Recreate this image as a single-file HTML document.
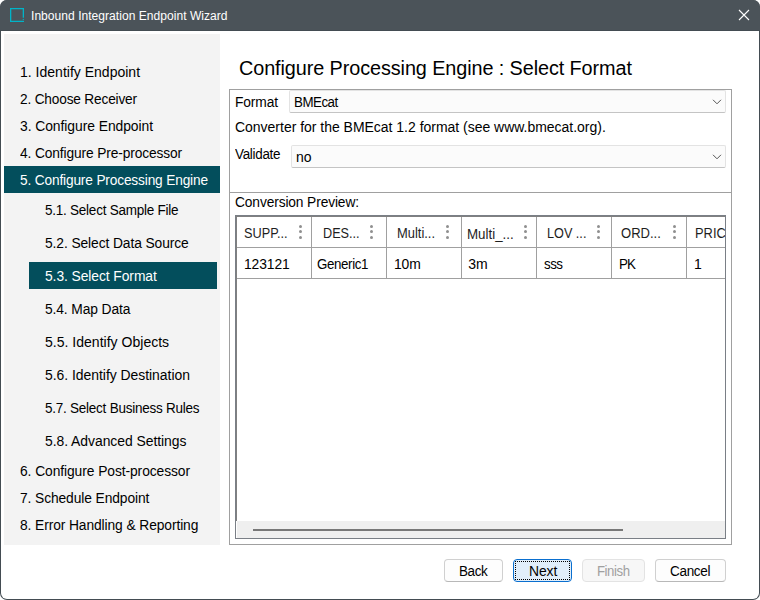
<!DOCTYPE html>
<html><head><meta charset="utf-8">
<style>
*{margin:0;padding:0;box-sizing:border-box}
html,body{width:760px;height:600px;overflow:hidden;background:#ffffff}
body{position:relative;font-family:"Liberation Sans",sans-serif;font-size:14px;color:#000}
.a{position:absolute;white-space:nowrap}
.r{position:absolute}
</style></head><body>
<div class="r" style="left:0;top:0;width:760px;height:600px;border-radius:7px;background:#434c52;overflow:hidden"><div class="r" style="left:0;top:0;width:760px;height:30px;background:#4b5359"></div><div class="r" style="left:1px;top:31px;width:758px;height:568px;background:#fff;border-radius:0 0 6px 6px"></div></div>
<svg class="a" style="left:0;top:0" width="30" height="30" viewBox="0 0 30 30"><path d="M23.35 17.7V8.65H10.65V21.35H24" fill="none" stroke="#00b4c8" stroke-width="1.3"/><circle cx="23.3" cy="19.35" r="0.7" fill="#00b4c8"/></svg>
<div class="a" style="left:30.5px;top:9px;font-size:12px;line-height:14px;letter-spacing:0.026px;transform:scaleX(1.0045);transform-origin:0 0;color:#ffffff;">Inbound Integration Endpoint Wizard</div>
<svg class="a" style="left:736px;top:7px" width="16" height="16" viewBox="0 0 16 16"><path d="M3 3L13 13M13 3L3 13" stroke="#fff" stroke-width="1.1"/></svg>
<div class="r" style="left:4px;top:34px;width:216px;height:511px;background:#f3f3f3"></div>
<div class="r" style="left:4px;top:166px;width:216px;height:27px;background:#034e5c"></div>
<div class="r" style="left:29px;top:262px;width:188px;height:27px;background:#034e5c"></div>
<div class="a" style="left:20px;top:64px;font-size:14px;line-height:16px;letter-spacing:0.005px;transform:scaleX(1.0007);transform-origin:0 0;">1. Identify Endpoint</div>
<div class="a" style="left:20px;top:91px;font-size:14px;line-height:16px;letter-spacing:-0.178px;transform:scaleX(0.9760);transform-origin:0 0;">2. Choose Receiver</div>
<div class="a" style="left:20px;top:118px;font-size:14px;line-height:16px;letter-spacing:-0.060px;transform:scaleX(0.9912);transform-origin:0 0;">3. Configure Endpoint</div>
<div class="a" style="left:20px;top:145px;font-size:14px;line-height:16px;letter-spacing:-0.122px;transform:scaleX(0.9821);transform-origin:0 0;">4. Configure Pre-processor</div>
<div class="a" style="left:20px;top:172px;font-size:14px;line-height:16px;letter-spacing:-0.156px;transform:scaleX(0.9776);transform-origin:0 0;color:#fff;">5. Configure Processing Engine</div>
<div class="a" style="left:45px;top:202px;font-size:14px;line-height:16px;letter-spacing:-0.246px;transform:scaleX(0.9638);transform-origin:0 0;">5.1. Select Sample File</div>
<div class="a" style="left:45px;top:235px;font-size:14px;line-height:16px;letter-spacing:-0.095px;transform:scaleX(0.9860);transform-origin:0 0;">5.2. Select Data Source</div>
<div class="a" style="left:45px;top:268px;font-size:14px;line-height:16px;letter-spacing:-0.076px;transform:scaleX(0.9889);transform-origin:0 0;color:#fff;">5.3. Select Format</div>
<div class="a" style="left:45px;top:301px;font-size:14px;line-height:16px;letter-spacing:-0.106px;transform:scaleX(0.9857);transform-origin:0 0;">5.4. Map Data</div>
<div class="a" style="left:45px;top:334px;font-size:14px;line-height:16px;letter-spacing:0.010px;transform:scaleX(1.0016);transform-origin:0 0;">5.5. Identify Objects</div>
<div class="a" style="left:45px;top:367px;font-size:14px;line-height:16px;letter-spacing:-0.029px;transform:scaleX(0.9953);transform-origin:0 0;">5.6. Identify Destination</div>
<div class="a" style="left:45px;top:400px;font-size:14px;line-height:16px;letter-spacing:-0.249px;transform:scaleX(0.9640);transform-origin:0 0;">5.7. Select Business Rules</div>
<div class="a" style="left:45px;top:433px;font-size:14px;line-height:16px;letter-spacing:-0.043px;transform:scaleX(0.9938);transform-origin:0 0;">5.8. Advanced Settings</div>
<div class="a" style="left:20px;top:463px;font-size:14px;line-height:16px;letter-spacing:-0.082px;transform:scaleX(0.9878);transform-origin:0 0;">6. Configure Post-processor</div>
<div class="a" style="left:20px;top:490px;font-size:14px;line-height:16px;letter-spacing:-0.100px;transform:scaleX(0.9859);transform-origin:0 0;">7. Schedule Endpoint</div>
<div class="a" style="left:20px;top:517px;font-size:14px;line-height:16px;letter-spacing:-0.096px;transform:scaleX(0.9856);transform-origin:0 0;">8. Error Handling &amp; Reporting</div>
<div class="a" style="left:239px;top:57px;font-size:20px;line-height:23px;letter-spacing:-0.087px;transform:scaleX(0.9909);transform-origin:0 0;">Configure Processing Engine : Select Format</div>
<div class="r" style="left:229px;top:89px;width:503px;height:456px;border:1px solid #a0a0a0"></div>
<div class="r" style="left:230px;top:192px;width:501px;height:1px;background:#a0a0a0"></div>
<div class="r" style="left:289px;top:90px;width:437px;height:23px;background:#fbfbfb;border:1px solid #e3e3e3;border-bottom-color:#c4c4c4;border-radius:2px"></div>
<svg class="a" style="left:712px;top:99px" width="10" height="7" viewBox="0 0 10 7"><path d="M1 0.8L5 4.8L9 0.8" fill="none" stroke="#555" stroke-width="1.0"/></svg>
<div class="r" style="left:291px;top:145px;width:435px;height:23px;background:#fbfbfb;border:1px solid #e3e3e3;border-bottom-color:#c4c4c4;border-radius:2px"></div>
<svg class="a" style="left:712px;top:154px" width="10" height="7" viewBox="0 0 10 7"><path d="M1 0.8L5 4.8L9 0.8" fill="none" stroke="#555" stroke-width="1.0"/></svg>
<div class="a" style="left:235px;top:94px;font-size:14px;line-height:16px;letter-spacing:-0.133px;transform:scaleX(0.9852);transform-origin:0 0;">Format</div>
<div class="a" style="left:294px;top:94px;font-size:14px;line-height:16px;letter-spacing:-0.506px;transform:scaleX(0.9509);transform-origin:0 0;">BMEcat</div>
<div class="a" style="left:235px;top:119px;font-size:14px;line-height:16px;letter-spacing:-0.010px;transform:scaleX(0.9985);transform-origin:0 0;">Converter for the BMEcat 1.2 format (see www.bmecat.org).</div>
<div class="a" style="left:235px;top:146px;font-size:14px;line-height:16px;letter-spacing:-0.301px;transform:scaleX(0.9592);transform-origin:0 0;">Validate</div>
<div class="a" style="left:296px;top:149px;font-size:14px;line-height:16px;">no</div>
<div class="a" style="left:235px;top:194px;font-size:14px;line-height:16px;letter-spacing:-0.123px;transform:scaleX(0.9831);transform-origin:0 0;">Conversion Preview:</div>
<div class="r" style="left:235px;top:215px;width:491px;height:324px;border:1px solid #7a7f86;background:#fff"></div>
<div class="r" style="left:236px;top:216px;width:1px;height:305px;background:#808080"></div>
<div class="r" style="left:236px;top:216px;width:489px;height:1px;background:#808080"></div>
<div class="r" style="left:237px;top:247px;width:488px;height:1px;background:#a0a0a0"></div>
<div class="r" style="left:237px;top:278px;width:488px;height:1px;background:#a0a0a0"></div>
<div class="r" style="left:311px;top:217px;width:1px;height:62px;background:#a0a0a0"></div>
<div class="r" style="left:386px;top:217px;width:1px;height:62px;background:#a0a0a0"></div>
<div class="r" style="left:461px;top:217px;width:1px;height:62px;background:#a0a0a0"></div>
<div class="r" style="left:536px;top:217px;width:1px;height:62px;background:#a0a0a0"></div>
<div class="r" style="left:611px;top:217px;width:1px;height:62px;background:#a0a0a0"></div>
<div class="r" style="left:686px;top:217px;width:1px;height:62px;background:#a0a0a0"></div>
<div class="a" style="left:244.4px;top:225px;font-size:14px;line-height:16px;color:#1e1e1e;transform:scaleX(0.9080);transform-origin:0 0;">SUPP...</div>
<div class="r" style="left:299.4px;top:225.1px;width:3px;height:3px;border-radius:50%;background:#8f8f8f"></div>
<div class="r" style="left:299.4px;top:230.4px;width:3px;height:3px;border-radius:50%;background:#8f8f8f"></div>
<div class="r" style="left:299.4px;top:235.5px;width:3px;height:3px;border-radius:50%;background:#8f8f8f"></div>
<div class="a" style="left:322.6px;top:225px;font-size:14px;line-height:16px;color:#1e1e1e;transform:scaleX(0.9044);transform-origin:0 0;">DES...</div>
<div class="r" style="left:370.4px;top:225.1px;width:3px;height:3px;border-radius:50%;background:#8f8f8f"></div>
<div class="r" style="left:370.4px;top:230.4px;width:3px;height:3px;border-radius:50%;background:#8f8f8f"></div>
<div class="r" style="left:370.4px;top:235.5px;width:3px;height:3px;border-radius:50%;background:#8f8f8f"></div>
<div class="a" style="left:397px;top:225px;font-size:14px;line-height:16px;color:#1e1e1e;transform:scaleX(0.9219);transform-origin:0 0;">Multi...</div>
<div class="r" style="left:446.3px;top:225.1px;width:3px;height:3px;border-radius:50%;background:#8f8f8f"></div>
<div class="r" style="left:446.3px;top:230.4px;width:3px;height:3px;border-radius:50%;background:#8f8f8f"></div>
<div class="r" style="left:446.3px;top:235.5px;width:3px;height:3px;border-radius:50%;background:#8f8f8f"></div>
<div class="a" style="left:466.5px;top:226px;font-size:14px;line-height:16px;color:#1e1e1e;transform:scaleX(0.9531);transform-origin:0 0;">Multi_...</div>
<div class="r" style="left:524.3px;top:225.1px;width:3px;height:3px;border-radius:50%;background:#8f8f8f"></div>
<div class="r" style="left:524.3px;top:230.4px;width:3px;height:3px;border-radius:50%;background:#8f8f8f"></div>
<div class="r" style="left:524.3px;top:235.5px;width:3px;height:3px;border-radius:50%;background:#8f8f8f"></div>
<div class="a" style="left:546.6px;top:225px;font-size:14px;line-height:16px;color:#1e1e1e;transform:scaleX(0.9041);transform-origin:0 0;">LOV ...</div>
<div class="r" style="left:597.4px;top:225.1px;width:3px;height:3px;border-radius:50%;background:#8f8f8f"></div>
<div class="r" style="left:597.4px;top:230.4px;width:3px;height:3px;border-radius:50%;background:#8f8f8f"></div>
<div class="r" style="left:597.4px;top:235.5px;width:3px;height:3px;border-radius:50%;background:#8f8f8f"></div>
<div class="a" style="left:621.3px;top:225px;font-size:14px;line-height:16px;color:#1e1e1e;transform:scaleX(0.9303);transform-origin:0 0;">ORD...</div>
<div class="r" style="left:672.5px;top:225.1px;width:3px;height:3px;border-radius:50%;background:#8f8f8f"></div>
<div class="r" style="left:672.5px;top:230.4px;width:3px;height:3px;border-radius:50%;background:#8f8f8f"></div>
<div class="r" style="left:672.5px;top:235.5px;width:3px;height:3px;border-radius:50%;background:#8f8f8f"></div>
<div class="a" style="left:695.3px;top:225px;font-size:14px;line-height:16px;color:#1e1e1e;transform:scaleX(0.92);transform-origin:0 0;">PRIC</div>
<div class="a" style="left:244px;top:256px;font-size:14px;line-height:16px;letter-spacing:-0.100px;transform:scaleX(0.9894);transform-origin:0 0;">123121</div>
<div class="a" style="left:317.4px;top:256px;font-size:14px;line-height:16px;letter-spacing:-0.403px;transform:scaleX(0.9526);transform-origin:0 0;">Generic1</div>
<div class="a" style="left:393.8px;top:256px;font-size:14px;line-height:16px;letter-spacing:-0.105px;transform:scaleX(0.9923);transform-origin:0 0;">10m</div>
<div class="a" style="left:468.3px;top:256px;font-size:14px;line-height:16px;">3m</div>
<div class="a" style="left:543.6px;top:256px;font-size:14px;line-height:16px;letter-spacing:-0.525px;transform:scaleX(0.9524);transform-origin:0 0;">sss</div>
<div class="a" style="left:618.8px;top:256px;font-size:14px;line-height:16px;letter-spacing:-0.884px;transform:scaleX(0.9548);transform-origin:0 0;">PK</div>
<div class="a" style="left:693.9px;top:256px;font-size:14px;line-height:16px;">1</div>
<div class="r" style="left:726px;top:214px;width:5px;height:30px;background:#fff"></div>
<div class="r" style="left:725px;top:215px;width:1px;height:324px;background:#7a7f86"></div>
<div class="r" style="left:237px;top:521px;width:488px;height:17px;background:#efefef"></div>
<div class="r" style="left:253px;top:529px;width:370px;height:2px;background:#787878"></div>
<div class="r" style="left:444px;top:559px;width:59px;height:23px;border:1px solid #d0d0d0;border-bottom-color:#b8b8b8;border-radius:4px;background:#fdfdfd;"></div>
<div class="r" style="left:513px;top:559px;width:59px;height:23px;border:1px solid #0a6fcf;border-radius:4px;background:#e1eefa"></div>
<div class="r" style="left:515px;top:561px;width:55px;height:19px;border:1px dotted #000"></div>
<div class="r" style="left:582px;top:559px;width:63px;height:23px;border:1px solid #e3e3e3;border-radius:4px;background:#f7f7f7"></div>
<div class="r" style="left:655px;top:559px;width:71px;height:23px;border:1px solid #d0d0d0;border-bottom-color:#b8b8b8;border-radius:4px;background:#fdfdfd;"></div>
<div class="a" style="left:459px;top:563px;font-size:14px;line-height:16px;letter-spacing:-0.421px;transform:scaleX(0.9610);transform-origin:0 0;">Back</div>
<div class="a" style="left:528.5px;top:563px;font-size:14px;line-height:16px;letter-spacing:-0.081px;transform:scaleX(0.9916);transform-origin:0 0;">Next</div>
<div class="a" style="left:597.3px;top:563px;font-size:14px;line-height:16px;letter-spacing:-0.459px;transform:scaleX(0.9420);transform-origin:0 0;color:#a0a0a0;">Finish</div>
<div class="a" style="left:670px;top:563px;font-size:14px;line-height:16px;letter-spacing:-0.317px;transform:scaleX(0.9648);transform-origin:0 0;">Cancel</div>
</body></html>
